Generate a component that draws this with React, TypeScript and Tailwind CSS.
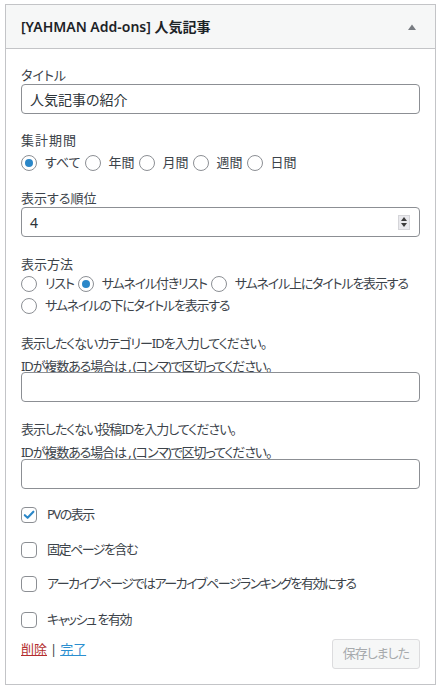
import React from 'react';

const blue = '#2b87c8';

function Radio({ checked }: { checked?: boolean }) {
  return (
    <span className="w-4 h-4 rounded-full border border-[#8c8f94] bg-white flex items-center justify-center shrink-0">
      {checked && <span className="w-2 h-2 rounded-full bg-[#2b87c8]" />}
    </span>
  );
}

function Option({ label, checked }: { label: string; checked?: boolean }) {
  return (
    <span className="flex items-center shrink-0 whitespace-nowrap">
      <Radio checked={checked} />
      <span className="ml-2 mr-1">{label}</span>
    </span>
  );
}

function Checkbox({ label, checked }: { label: string; checked?: boolean }) {
  return (
    <div className="flex items-center h-[22px]">
      <span className="w-4 h-4 rounded-[4px] border border-[#8c8f94] bg-white flex items-center justify-center shrink-0">
        {checked && (
          <svg width="16" height="16" viewBox="0 0 16 16">
            <path d="M3.2 8.2 L6.4 11.2 L13 4.2" fill="none" stroke={blue} strokeWidth="2.4" strokeLinecap="round" strokeLinejoin="round" />
          </svg>
        )}
      </span>
      <span className="ml-[10px] tracking-[-1.5px] whitespace-nowrap">{label}</span>
    </div>
  );
}

function TextInput({ value = '' }: { value?: string }) {
  return (
    <div className="h-[30px] w-full rounded-[4px] border border-[#8c8f94] bg-white px-2 flex items-center text-[14px] text-[#2c3338]">
      {value}
    </div>
  );
}

export default function App() {
  return (
    <div className="w-[441px] h-[689px] bg-white pt-1 px-[5px] font-['Noto_Sans','Noto_Sans_CJK_JP',sans-serif] [font-feature-settings:'palt'] text-[13px] text-[#3c434a]">
      <div className="border border-[#c3c4c7] h-[681px] flex flex-col">
        {/* Header */}
        <div className="h-[44px] bg-[#f6f7f7] border-b border-[#c3c4c7] flex items-center justify-between pl-[15px] pr-[19px]">
          <span className="text-[14px] font-semibold text-[#1d2327]">[YAHMAN Add-ons] 人気記事</span>
          <svg width="8" height="6" viewBox="0 0 8 6">
            <path d="M0 6 L4 0.5 L8 6 Z" fill="#787c82" />
          </svg>
        </div>

        <div className="px-[15px] flex flex-col">
          <div className="mt-[17px] leading-[18px]">タイトル</div>
          <TextInput value="人気記事の紹介" />

          <div className="mt-[17px] leading-[18px] tracking-[1px]">集計期間</div>
          <div className="mt-[3px] h-[22px] flex items-center">
            <Option label="すべて" checked />
            <Option label="年間" />
            <Option label="月間" />
            <Option label="週間" />
            <Option label="日間" />
          </div>

          <div className="mt-[15px] leading-[18px]">表示する順位</div>
          <div className="h-[30px] w-full rounded-[4px] border border-[#8c8f94] bg-white pl-2 pr-[9px] flex items-center justify-between text-[14px] text-[#2c3338]">
            <span>4</span>
            <span className="w-[12px] h-[15px] bg-[#e9e9ed] flex flex-col items-center justify-around border border-[#d5d5d9]">
              <svg width="6" height="4" viewBox="0 0 6 4"><path d="M0 4 L3 0 L6 4 Z" fill="#3c3c3c" /></svg>
              <svg width="6" height="4" viewBox="0 0 6 4"><path d="M0 0 L3 4 L6 0 Z" fill="#3c3c3c" /></svg>
            </span>
          </div>

          <div className="mt-[18px] leading-[18px]">表示方法</div>
          <div className="h-[22px] flex items-center tracking-[-1.2px]">
            <Option label="リスト" />
            <Option label="サムネイル付きリスト" checked />
            <Option label="サムネイル上にタイトルを表示する" />
          </div>
          <div className="h-[22px] flex items-center tracking-[-1.2px]">
            <Option label="サムネイルの下にタイトルを表示する" />
          </div>

          <div className="mt-[19px] leading-[14px] tracking-[-1px]">表示したくないカテゴリーIDを入力してください。</div>
          <div className="mt-[9px] leading-[14px] tracking-[-1.1px]">IDが複数ある場合は , (コンマ)で区切ってください。</div>
          <div className="mt-[-1px]">
            <TextInput />
          </div>

          <div className="mt-[20px] leading-[14px] tracking-[-1px]">表示したくない投稿IDを入力してください。</div>
          <div className="mt-[9px] leading-[14px] tracking-[-1.1px]">IDが複数ある場合は , (コンマ)で区切ってください。</div>
          <TextInput />

          <div className="mt-[15px]">
            <Checkbox label="PVの表示" checked />
          </div>
          <div className="mt-[13px]">
            <Checkbox label="固定ページを含む" />
          </div>
          <div className="mt-[12px]">
            <Checkbox label="アーカイブページではアーカイブページランキングを有効にする" />
          </div>
          <div className="mt-[14px]">
            <Checkbox label="キャッシュ を有効" />
          </div>

          <div className="mt-[8px] flex items-start justify-between">
            <div className="leading-[18px] mt-[1px]">
              <a className="text-[#b32d2e] underline">削除</a>
              <span className="mx-[3px]">|</span>
              <a className="text-[#2b8fd0] underline">完了</a>
            </div>
            <button className="h-[30px] px-[10px] rounded-[3px] border border-[#dcdcde] bg-[#f6f7f7] text-[#a7aaad] text-[13px] tracking-[-1px]">
              保存しました
            </button>
          </div>
        </div>
      </div>
    </div>
  );
}
